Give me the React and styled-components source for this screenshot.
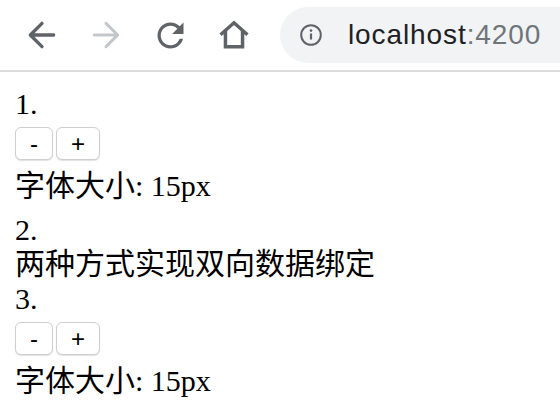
import React from "react";
import styled, { createGlobalStyle } from "styled-components";

const GlobalStyle = createGlobalStyle`
  body {
    margin: 0;
    background: #ffffff;
    font-family: "Liberation Serif", "Noto Sans CJK SC", serif;
  }
`;

const Toolbar = styled.div`
  display: flex;
  align-items: center;
  height: 70px;
  padding-left: 10px;
  border-bottom: 2px solid #dddddd;
  overflow: hidden;
`;

const NavButton = styled.div`
  display: flex;
  align-items: center;
  justify-content: center;
  width: 64px;
  height: 64px;
  color: ${(p) => (p.disabled ? "#c4c7ca" : "#5f6368")};
`;

const Omnibox = styled.div`
  display: flex;
  align-items: center;
  flex: 1;
  height: 56px;
  margin-left: 14px;
  padding-left: 20px;
  border-radius: 28px 0 0 28px;
  background: #f1f3f4;
  font-family: "Liberation Sans", Arial, sans-serif;
  font-size: 28px;
  letter-spacing: 0.9px;
`;

const Host = styled.span`
  margin-left: 26px;
  color: #202124;
`;

const Port = styled.span`
  color: #70757a;
`;

const Page = styled.div`
  padding: 15px;
  font-size: 30px;
  color: #000000;
`;

const Line = styled.div`
  height: ${(p) => p.h || 33}px;
  line-height: ${(p) => p.h || 33}px;
  margin-top: ${(p) => p.top || 0}px;
  white-space: nowrap;
`;

const ButtonRow = styled.div`
  display: flex;
  gap: 3px;
  margin-top: ${(p) => p.top || 0}px;
`;

const Button = styled.button`
  height: 33px;
  padding: 0 14px;
  border: 1px solid #cfcfcf;
  border-radius: 6px;
  background: #ffffff;
  box-shadow: 0 1px 1px rgba(0, 0, 0, 0.12);
  font-family: "Liberation Sans", Arial, sans-serif;
  font-size: 24px;
  line-height: 1;
  color: #000000;
`;

const BackIcon = () => (
  <svg width="40" height="40" viewBox="0 0 24 24" fill="none" stroke="currentColor" strokeWidth="2" strokeLinecap="round" strokeLinejoin="round">
    <path d="M19 12H5M12 5l-7 7 7 7" />
  </svg>
);

const ForwardIcon = () => (
  <svg width="40" height="40" viewBox="0 0 24 24" fill="none" stroke="currentColor" strokeWidth="1.8" strokeLinecap="round" strokeLinejoin="round">
    <path d="M5 12h14M12 5l7 7-7 7" />
  </svg>
);

const ReloadIcon = () => (
  <svg width="39" height="39" viewBox="0 0 24 24" fill="currentColor">
    <path d="M17.65 6.35C16.2 4.9 14.21 4 12 4c-4.42 0-7.99 3.58-7.99 8s3.57 8 7.99 8c3.73 0 6.84-2.55 7.73-6h-2.08c-.82 2.33-3.04 4-5.65 4-3.31 0-6-2.69-6-6s2.69-6 6-6c1.66 0 3.14.69 4.22 1.78L13 11h7V4l-2.35 2.35z" />
  </svg>
);

const HomeIcon = () => (
  <svg width="38" height="38" viewBox="0 0 24 24" fill="none" stroke="currentColor" strokeWidth="2.2" strokeLinejoin="miter">
    <path d="M3.5 11.8L12 4.3l8.5 7.5M6.6 9.6v9.8h10.8V9.6" />
  </svg>
);

const InfoIcon = () => (
  <svg width="22" height="22" viewBox="0 0 22 22" fill="none" stroke="#5f6368">
    <circle cx="11" cy="11" r="9.8" strokeWidth="2" />
    <path d="M11 9.5v6" strokeWidth="2.2" />
    <circle cx="11" cy="6.6" r="1.3" fill="#5f6368" stroke="none" />
  </svg>
);

const Counter = ({ top }) => (
  <ButtonRow top={top}>
    <Button>-</Button>
    <Button>+</Button>
  </ButtonRow>
);

export default function App() {
  return (
    <>
      <GlobalStyle />
      <Toolbar>
        <NavButton>
          <BackIcon />
        </NavButton>
        <NavButton disabled>
          <ForwardIcon />
        </NavButton>
        <NavButton>
          <ReloadIcon />
        </NavButton>
        <NavButton>
          <HomeIcon />
        </NavButton>
        <Omnibox>
          <InfoIcon />
          <Host>
            localhost<Port>:4200</Port>
          </Host>
        </Omnibox>
      </Toolbar>
      <Page>
        <Line>1.</Line>
        <Counter top={7} />
        <Line top={7} h={37}>字体大小: 15px</Line>
        <Line top={11} h={30}>2.</Line>
        <Line h={37}>两种方式实现双向数据绑定</Line>
        <Line>3.</Line>
        <Counter top={7} />
        <Line top={7} h={37}>字体大小: 15px</Line>
      </Page>
    </>
  );
}
